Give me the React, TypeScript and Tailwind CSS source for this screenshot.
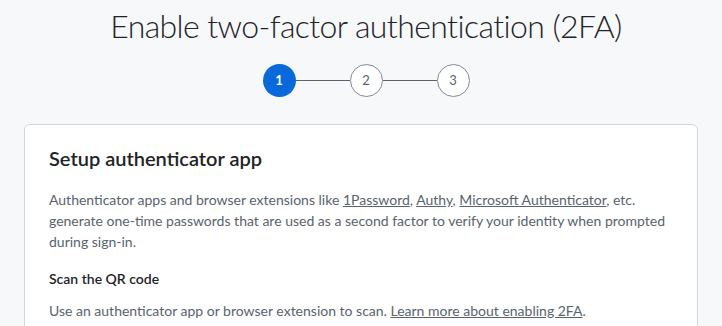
import React from "react";

function Step({ n, active }: { n: number; active?: boolean }) {
  return (
    <div
      className={
        active
          ? "flex h-[33px] w-[33px] items-center justify-center rounded-full bg-[#0969da] text-[13px] font-bold text-white"
          : "flex h-[33px] w-[33px] items-center justify-center rounded-full border border-[#818b98] bg-white text-[13px] text-[#59636e]"
      }
    >
      {n}
    </div>
  );
}

export default function App() {
  return (
    <div className="h-[326px] overflow-hidden bg-[#f6f8fa] font-['Lato',sans-serif] text-[#1f2328]">
      <h1 className="pl-[10px] pt-[2px] text-center text-[32px] font-light leading-[48px] tracking-[-0.6px] text-[#1f2328]">
        Enable two-factor authentication (2FA)
      </h1>
      <div className="mt-[14px] flex items-center justify-center pl-[10px]">
        <Step n={1} active />
        <div className="h-px w-[54px] bg-[#59636e]" />
        <Step n={2} />
        <div className="h-px w-[54px] bg-[#59636e]" />
        <Step n={3} />
      </div>
      <div className="mx-6 mt-[27px] rounded-md border border-[#d0d7de] bg-white px-6 pt-[18px] pb-6">
        <h2 className="text-[20px] font-semibold leading-[30px]">Setup authenticator app</h2>
        <p className="mt-[16px] text-[14px] leading-[21px] text-[#59636e]">
          Authenticator apps and browser extensions like <a className="underline" href="#">1Password</a>,{" "}
          <a className="underline" href="#">Authy</a>, <a className="underline" href="#">Microsoft Authenticator</a>, etc.
          <br />
          generate one-time passwords that are used as a second factor to verify your identity when prompted
          <br />
          during sign-in.
        </p>
        <h3 className="mt-[16px] text-[14px] font-semibold leading-[21px]">Scan the QR code</h3>
        <p className="mt-[11px] text-[14px] leading-[21px] text-[#59636e]">
          Use an authenticator app or browser extension to scan.{" "}
          <a className="underline" href="#">Learn more about enabling 2FA</a>.
        </p>
      </div>
    </div>
  );
}
